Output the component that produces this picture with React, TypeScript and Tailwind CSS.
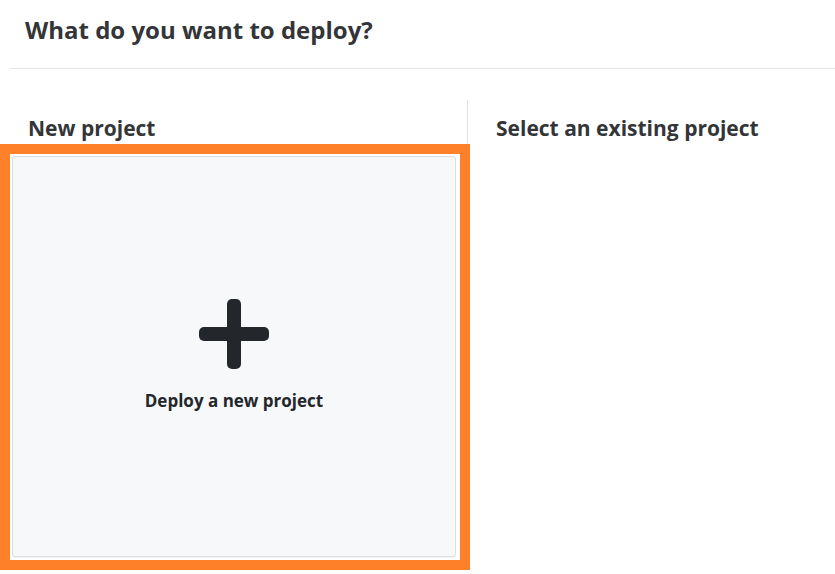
export default function App() {
  return (
    <div className="h-[574px] w-[835px] overflow-hidden bg-white font-['Open_Sans',sans-serif] text-[#333538]">
      <div className="ml-[10px] h-[69px] border-b border-[#e6e6e6] pl-[15px] pt-[13px]">
        <h1 className="text-[24px] font-bold leading-[34px]">What do you want to deploy?</h1>
      </div>

      <div className="mt-[31px] flex">
        <div className="w-[468px] shrink-0 border-r border-[#e3e3e3]">
          <h2 className="pl-[28px] pt-[13px] text-[21px] font-bold leading-[30px]">New project</h2>
          <div className="relative z-10 mt-px h-[426px] w-[470px] border-[10px] border-[#fe8029] bg-white pb-[3px] pl-[2px] pr-[4px] pt-[2px]">
            <button className="flex h-full w-full flex-col items-center justify-center rounded-[3px] border border-[#dcdee2] bg-[#f7f8fa] text-[#23262b] shadow-[0_1px_1px_rgba(0,0,0,0.06)]">
              <svg width="70" height="70" viewBox="0 0 70 70" fill="currentColor" className="mt-[-2px]">
                <rect x="28" y="0" width="14" height="70" rx="5" />
                <rect x="0" y="28" width="70" height="14" rx="5" />
              </svg>
              <span className="mt-[20px] text-[17px] font-bold leading-[24px]">Deploy a new project</span>
            </button>
          </div>
        </div>
        <div className="pl-[28px]">
          <h2 className="pt-[13px] text-[21px] font-bold leading-[30px]">Select an existing project</h2>
        </div>
      </div>
    </div>
  );
}
